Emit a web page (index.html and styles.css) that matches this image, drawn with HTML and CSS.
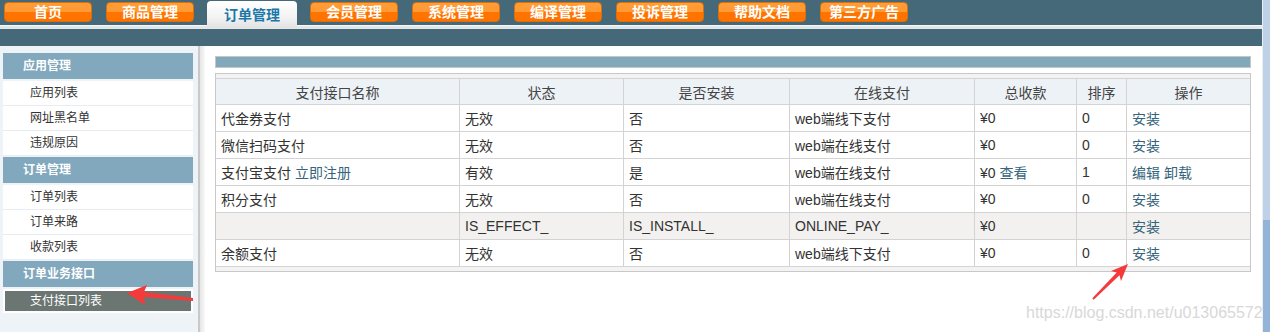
FILE: index.html
```html
<!DOCTYPE html>
<html>
<head>
	<title>支付接口列表</title>
	<link rel="stylesheet" href="styles.css">
</head>
<body>
	<div class="page">
		<div class="nav">
			<a class="nav-btn">首页</a>
			<a class="nav-btn">商品管理</a>
			<a class="nav-btn nav-active">订单管理</a>
			<a class="nav-btn">会员管理</a>
			<a class="nav-btn">系统管理</a>
			<a class="nav-btn">编译管理</a>
			<a class="nav-btn">投诉管理</a>
			<a class="nav-btn">帮助文档</a>
			<a class="nav-btn">第三方广告</a>
		</div>
		<div class="subbar"></div>

		<div class="main">
			<div class="side-wrap">
				<div class="side">
					<div class="side-title">应用管理</div>
					<ul class="side-list">
						<li>应用列表</li>
						<li>网址黑名单</li>
						<li>违规原因</li>
					</ul>
					<div class="side-title">订单管理</div>
					<ul class="side-list">
						<li>订单列表</li>
						<li>订单来路</li>
						<li>收款列表</li>
					</ul>
					<div class="side-title">订单业务接口</div>
					<div class="side-current">
						<div class="side-current-item">支付接口列表</div>
					</div>
				</div>
			</div>
			<div class="divider"></div>

			<div class="content">
				<div class="bar"></div>
				<div class="grid-wrap">
					<table class="grid">
						<colgroup>
							<col style="width:243px">
							<col style="width:164px">
							<col style="width:166px">
							<col style="width:185px">
							<col style="width:102px">
							<col style="width:50px">
							<col>
						</colgroup>
						<tr>
							<th>支付接口名称</th>
							<th>状态</th>
							<th>是否安装</th>
							<th>在线支付</th>
							<th>总收款</th>
							<th>排序</th>
							<th>操作</th>
						</tr>
						<tr>
							<td>代金券支付</td>
							<td>无效</td>
							<td>否</td>
							<td>web端线下支付</td>
							<td>¥0</td>
							<td>0</td>
							<td><a>安装</a></td>
						</tr>
						<tr>
							<td>微信扫码支付</td>
							<td>无效</td>
							<td>否</td>
							<td>web端在线支付</td>
							<td>¥0</td>
							<td>0</td>
							<td><a>安装</a></td>
						</tr>
						<tr>
							<td>支付宝支付 <a>立即注册</a></td>
							<td>有效</td>
							<td>是</td>
							<td>web端在线支付</td>
							<td>¥0 <a>查看</a></td>
							<td>1</td>
							<td><a>编辑</a> <a>卸载</a></td>
						</tr>
						<tr>
							<td>积分支付</td>
							<td>无效</td>
							<td>否</td>
							<td>web端在线支付</td>
							<td>¥0</td>
							<td>0</td>
							<td><a>安装</a></td>
						</tr>
						<tr class="tpl">
							<td></td>
							<td>IS_EFFECT_</td>
							<td>IS_INSTALL_</td>
							<td>ONLINE_PAY_</td>
							<td>¥0</td>
							<td></td>
							<td><a>安装</a></td>
						</tr>
						<tr>
							<td>余额支付</td>
							<td>无效</td>
							<td>否</td>
							<td>web端线下支付</td>
							<td>¥0</td>
							<td>0</td>
							<td><a>安装</a></td>
						</tr>
					</table>
				</div>
			</div>
		</div>
	</div>

	<div class="scroll">
		<div class="scroll-thumb"></div>
	</div>

	<!-- annotation arrows drawn over the screenshot -->
	<svg class="marks" width="1270" height="332" viewBox="0 0 1270 332">
		<polygon fill="#f43b3b" points="127,293 147,285 144,292 193,298 193,301 144,297 145,305"/>
		<polygon fill="#f43b3b" points="1128,264 1111,271 1116.7,272.5 1092.3,298.3 1093.7,299.7 1119.5,275.3 1121,281"/>
	</svg>
	<div class="watermark">https://blog.csdn.net/u013065572</div>
</body>
</html>
```

FILE: styles.css
```css
body {
	margin: 0;
	display: flex;
	height: 332px;
	overflow: hidden;
	font-family: "Liberation Sans", "Noto Sans CJK SC", sans-serif;
	color: #333;
	position: relative;
}

.page {
	width: 1262px;
	display: flex;
	flex-direction: column;
}

/* top navigation */
.nav {
	height: 29px;
	display: flex;
	align-items: flex-start;
	gap: 14px;
	padding-left: 4px;
	background: linear-gradient(to bottom, #46697a 0, #46697a 25px, #f7f7f7 25px, #f7f7f7 26px, #e2e7ea 26px);
}

.nav-btn {
	box-sizing: border-box;
	width: 88px;
	height: 20px;
	margin-top: 2px;
	border: 1px solid #d9700a;
	border-radius: 4px;
	background: linear-gradient(to bottom, #ff9d3a 0, #ff9933 50%, #ff7400 50%, #ff7200 100%);
	color: #fff;
	font-size: 14px;
	font-weight: bold;
	line-height: 18px;
	text-align: center;
}

.nav-btn.nav-active {
	width: 90px;
	height: 27px;
	margin: 1px -1px 0;
	border: none;
	border-radius: 4px 4px 0 0;
	background: linear-gradient(to bottom, #ffffff, #f3f3f3 60%, #e2e2e2);
	color: #1b77a8;
	line-height: 28px;
}

.subbar {
	height: 17px;
	background-color: #46697a;
}

.main {
	flex: 1;
	display: flex;
}

/* left menu */
.side-wrap {
	width: 198px;
	box-sizing: border-box;
	padding: 7px 0 0 3px;
	background-color: #eef3f7;
}

.side {
	width: 190px;
	font-size: 12px;
}

.side-title {
	height: 26px;
	line-height: 26px;
	padding-left: 20px;
	background-color: #81a8bd;
	color: #fff;
	font-weight: bold;
}

.side-list {
	list-style: none;
	margin: 2px 0 1px;
	padding: 0;
}

.side-list li {
	height: 24px;
	line-height: 24px;
	padding-left: 27px;
	background-color: #fff;
	border-bottom: 1px solid #e8edf1;
	color: #333;
}

.side-current {
	margin-top: 2px;
	padding: 2px;
	background-color: #fff;
}

.side-current-item {
	height: 20px;
	line-height: 20px;
	padding-left: 25px;
	background-color: #6b7571;
	color: #fff;
}

.divider {
	width: 5px;
	border-left: 2px solid #c9c9c9;
	background: linear-gradient(to right, #e6e6e6, #f8f8f8);
}

/* content */
.content {
	flex: 1;
	padding: 10px 11px 0 10px;
	background-color: #fff;
}

.bar {
	height: 10px;
	border: 1px solid #c6c6c6;
	background-color: #82a8bc;
	margin-bottom: 5px;
}

.grid-wrap {
	border: 1px solid #c8c8c8;
	padding: 4px 0;
	background-color: #f3f3f3;
}

.grid {
	width: 100%;
	table-layout: fixed;
	border-collapse: separate;
	border-spacing: 0;
	font-size: 14px;
}

.grid th,
.grid td {
	box-sizing: border-box;
	height: 27px;
	padding: 0 5px;
	border-left: 1px solid #d3d3d3;
	border-bottom: 1px solid #d3d3d3;
	background-color: #fff;
	white-space: nowrap;
	overflow: hidden;
	text-align: left;
	font-weight: normal;
}

.grid th {
	border-top: 1px solid #d3d3d3;
	background-color: #edf2f7;
	text-align: center;
	color: #444;
}

.grid th:first-child,
.grid td:first-child {
	border-left: none;
}

.grid tr.tpl td {
	background-color: #f2f1ef;
}

.grid a {
	color: #35647c;
}

/* fake window scrollbar */
.scroll {
	width: 7px;
	border-left: 1px solid #e9eef4;
	background-color: #bfd1e7;
	display: flex;
	flex-direction: column;
	justify-content: flex-end;
}

.scroll-thumb {
	height: 112px;
	background-color: #93b3d7;
}

.marks {
	position: absolute;
	top: 0;
	left: 0;
	pointer-events: none;
}

.watermark {
	position: absolute;
	left: 1026px;
	top: 304px;
	font-size: 16px;
	font-family: "Liberation Sans", sans-serif;
	color: #d8d8d8;
	white-space: nowrap;
}
```
